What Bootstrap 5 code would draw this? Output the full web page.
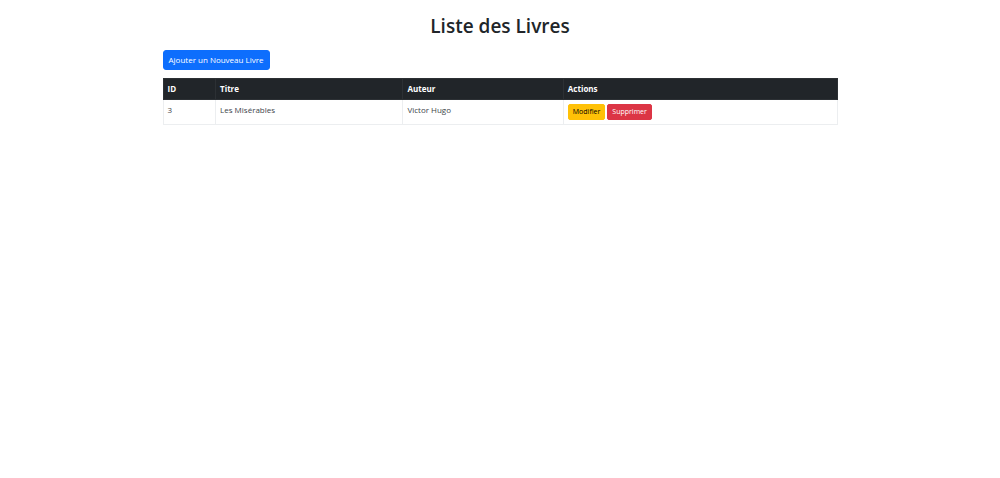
<!DOCTYPE html>
<html lang="fr">
<head>
<meta charset="utf-8">
<meta name="viewport" content="width=device-width, initial-scale=1">
<title>Liste des Livres</title>
<link href="https://cdn.jsdelivr.net/npm/bootstrap@5.3.0/dist/css/bootstrap.min.css" rel="stylesheet">
<style>
  body { font-family: "Open Sans", "Noto Sans", sans-serif; font-size: 8px; line-height: 12px; }
  .page { width: 67.5%; padding-top: 14px; }
  .page-title { font-size: 19px; line-height: 24px; font-weight: 600; margin-bottom: 12px; }
  .btn-add { font-size: 8px; line-height: 12px; padding: 3px 5px; border-radius: 3px; }
  .btn-row { font-size: 7px; line-height: 10px; padding: 2px 4px; border-radius: 2px; }
  .action-list { gap: 2px; }
  .books { table-layout: fixed; border-color: #eceef0; }
  .books > :not(caption) > * > * { padding: 4px; }
  .books > .table-dark { border-color: #2c3034; }
  .books td { color: #40454a; }
  .col-id { width: 7.8%; }
  .col-title { width: 27.8%; }
  .col-author { width: 23.8%; }
</style>
</head>
<body>
<main class="page mx-auto">
  <h1 class="page-title text-center">Liste des Livres</h1>
  <a href="#" class="btn btn-primary btn-add mb-2">Ajouter un Nouveau Livre</a>
  <table class="table table-bordered books mb-0">
    <colgroup><col class="col-id"><col class="col-title"><col class="col-author"><col></colgroup>
    <thead class="table-dark">
      <tr><th scope="col">ID</th><th scope="col">Titre</th><th scope="col">Auteur</th><th scope="col">Actions</th></tr>
    </thead>
    <tbody>
      <tr>
        <td>3</td><td>Les Misérables</td><td>Victor Hugo</td>
        <td><div class="d-flex action-list"><a href="#" class="btn btn-warning btn-row">Modifier</a><button type="button" class="btn btn-danger btn-row">Supprimer</button></div></td>
      </tr>
    </tbody>
  </table>
</main>
<script src="https://cdn.jsdelivr.net/npm/bootstrap@5.3.0/dist/js/bootstrap.bundle.min.js"></script>
</body>
</html>
